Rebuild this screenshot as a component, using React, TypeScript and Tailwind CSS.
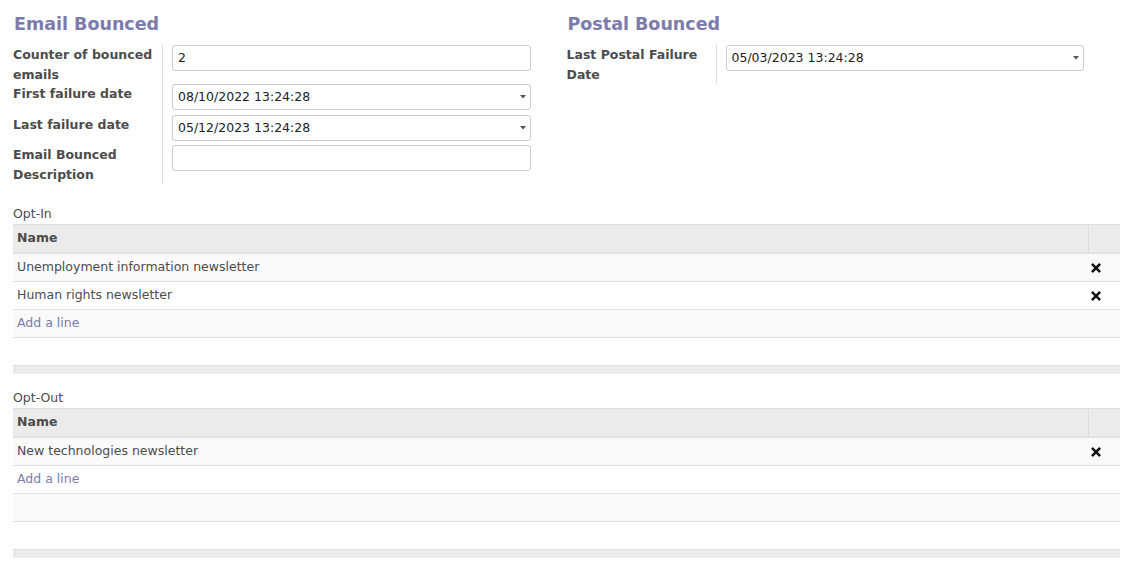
import * as React from 'react';

const font = { fontFamily: '"DejaVu Sans", "Noto Sans", sans-serif' };

function Caret() {
  return (
    <svg className="absolute right-[4px] top-1/2 -translate-y-1/2" width="6" height="4" viewBox="0 0 6 4">
      <path d="M0 0h6L3 3.5z" fill="#555" />
    </svg>
  );
}

function Field({ value, date }: { value: string; date?: boolean }) {
  return (
    <div className="relative h-[26px] w-full border border-[#cccccc] rounded-[3px] bg-white pl-[5px] flex items-center text-[12.5px] text-[#222]">
      {value}
      {date && <Caret />}
    </div>
  );
}

function Row({ label, value, date, h }: { label: React.ReactNode; value: string; date?: boolean; h: string }) {
  return (
    <div className={`flex ${h}`}>
      <div className="w-[150px] shrink-0 border-r border-[#dddddd] pr-1 text-[12.5px] font-bold leading-[19.5px] text-[#4c4c4c]">
        {label}
      </div>
      <div className="flex-1 pl-[9px]">
        <Field value={value} date={date} />
      </div>
    </div>
  );
}

function Remove() {
  return (
    <svg width="10" height="10" viewBox="0 0 10 10">
      <path d="M1.8 1.8L8.2 8.2M8.2 1.8L1.8 8.2" stroke="#111" strokeWidth="2.5" strokeLinecap="square" />
    </svg>
  );
}

function Line({ odd, children, remove }: { odd: boolean; children?: React.ReactNode; remove?: boolean }) {
  return (
    <div className={`flex h-[28px] border-b border-[#dee2e6] ${odd ? 'bg-[#fafafa]' : 'bg-white'}`}>
      <div className="flex-1 px-[4px] flex items-center text-[12.5px] text-[#4c4c4c]">{children}</div>
      <div className="w-[32px] flex items-center pl-[3px]">{remove && <Remove />}</div>
    </div>
  );
}

function Table({ title, items, empty, gap }: { title: string; items: string[]; empty: number; gap: string }) {
  const rows: React.ReactNode[] = [];
  items.forEach((it, i) =>
    rows.push(
      <Line key={it} odd={i % 2 === 0} remove>
        {it}
      </Line>
    )
  );
  rows.push(
    <Line key="add" odd={items.length % 2 === 0}>
      <span className="text-[#7c7bad]">Add a line</span>
    </Line>
  );
  for (let i = 0; i < empty; i++) {
    rows.push(<Line key={'e' + i} odd={(items.length + 1 + i) % 2 === 0} />);
  }
  return (
    <div className={gap}>
      <div className="text-[12.5px] leading-[20px] text-[#4c4c4c]">{title}</div>
      <div className="border-t border-[#dddddd]">
        <div className="flex h-[29px] bg-[#ebebeb] border-b-2 border-[#dee2e6]">
          <div className="flex-1 px-[4px] flex items-center text-[12.5px] font-bold text-[#4c4c4c]">Name</div>
          <div className="w-[32px] border-l border-[#dddddd]" />
        </div>
        {rows}
        <div className="h-[8px] bg-[#ebebeb]" />
      </div>
    </div>
  );
}

export default function App() {
  return (
    <div className="bg-white min-h-[587px] px-[13px] pt-[12px] text-[#4c4c4c]" style={font}>
      <div className="flex">
        <div className="w-1/2 pr-[36px]">
          <h2 className="text-[17.5px] leading-[24px] font-bold text-[#7c7bad] pl-[1px] mb-[9px]">Email Bounced</h2>
          <Row h="h-[39px]" label="Counter of bounced emails" value="2" />
          <Row h="h-[31px]" label="First failure date" value="08/10/2022 13:24:28" date />
          <Row h="h-[30px]" label="Last failure date" value="05/12/2023 13:24:28" date />
          <Row h="h-[39px]" label="Email Bounced Description" value="" />
        </div>
        <div className="w-1/2 pr-[36px]">
          <h2 className="text-[17.5px] leading-[24px] font-bold text-[#7c7bad] pl-[1px] mb-[9px]">Postal Bounced</h2>
          <Row h="h-[39px]" label="Last Postal Failure Date" value="05/03/2023 13:24:28" date />
        </div>
      </div>
      <Table title="Opt-In" items={['Unemployment information newsletter', 'Human rights newsletter']} empty={1} gap="mt-[20px]" />
      <Table title="Opt-Out" items={['New technologies newsletter']} empty={2} gap="mt-[14px]" />
    </div>
  );
}
